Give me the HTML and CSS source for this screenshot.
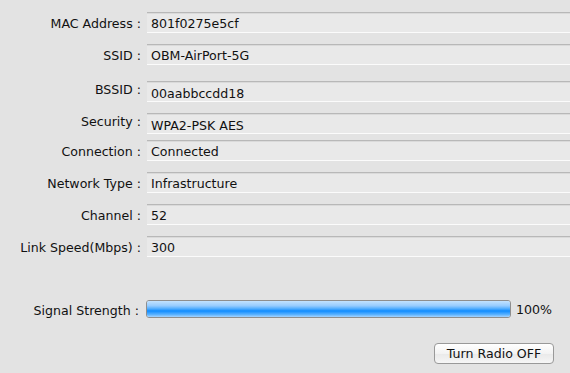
FILE: index.html
```html
<!DOCTYPE html>
<html>
<head>
    <title>Wireless Info</title>
    <link rel="stylesheet" href="styles.css">
</head>
<body>
<div class="panel">

    <!-- Info rows -->
    <div class="row">
        <label class="name">MAC Address :</label>
        <div class="field">801f0275e5cf</div>
    </div>
    <div class="row wide">
        <label class="name">SSID :</label>
        <div class="field">OBM-AirPort-5G</div>
    </div>
    <div class="row">
        <label class="name high">BSSID :</label>
        <div class="field low">00aabbccdd18</div>
    </div>
    <div class="row tight">
        <label class="name high">Security :</label>
        <div class="field low">WPA2-PSK AES</div>
    </div>
    <div class="row">
        <label class="name">Connection :</label>
        <div class="field">Connected</div>
    </div>
    <div class="row">
        <label class="name">Network Type :</label>
        <div class="field">Infrastructure</div>
    </div>
    <div class="row">
        <label class="name">Channel :</label>
        <div class="field">52</div>
    </div>
    <div class="row">
        <label class="name">Link Speed(Mbps) :</label>
        <div class="field">300</div>
    </div>

    <!-- Signal -->
    <div class="signal">
        <label class="name">Signal Strength :</label>
        <div class="meter"><div class="fill" style="width: 100%"></div></div>
        <span class="percent">100%</span>
    </div>

    <div class="actions">
        <button class="radio">Turn Radio OFF</button>
    </div>
</div>
</body>
</html>
```

FILE: styles.css
```css
body {
    margin: 0;
    background-color: #e3e3e3;
    font-family: "DejaVu Sans", "Liberation Sans", sans-serif;
    font-size: 12.6px;
    color: #111;
}

.panel {
    padding-top: 12px;
}

.row {
    display: flex;
    align-items: center;
    height: 21px;
    margin-bottom: 11px;
}

.row.wide {
    margin-bottom: 16px;
}

.row.tight {
    margin-bottom: 6px;
}

.name {
    position: relative;
    top: 1px;
    width: 141px;
    padding-right: 6px;
    text-align: right;
    white-space: nowrap;
}

.name.high {
    top: -2px;
}

.field {
    flex: 1;
    height: 19px;
    line-height: 21px;
    padding-left: 4px;
    background-color: #e9e9e9;
    border-top: 1px solid #b8b8b8;
    border-bottom: 1px solid #fbfbfb;
    box-shadow: inset 0 1px 0 #dadada;
}

.field.low {
    line-height: 23px;
}

.signal {
    display: flex;
    align-items: center;
    margin-top: 43px;
    height: 18px;
}

.signal .name {
    width: 139px;
    padding-right: 7px;
}

.meter {
    width: 363px;
    height: 16px;
    border: 1px solid #8e8e8e;
    border-radius: 3px;
    background-color: #f0f0f0;
    overflow: hidden;
}

.fill {
    height: 100%;
    background: linear-gradient(#c2e2ff 0%, #96ccff 30%, #4aaaff 50%, #0f8cff 62%, #5cb3ff 85%, #a6d4ff 100%);
}

.percent {
    padding-left: 5px;
}

.actions {
    display: flex;
    justify-content: flex-end;
    padding-right: 16px;
    margin-top: 25px;
}

.radio {
    width: 120px;
    height: 21px;
    font-family: "DejaVu Sans", "Liberation Sans", sans-serif;
    font-size: 12.6px;
    color: #111;
    background: linear-gradient(#ffffff, #f3f3f3 50%, #e9e9e9 51%, #f6f6f6);
    border: 1px solid #999;
    border-radius: 4px;
    padding: 0;
}
```
